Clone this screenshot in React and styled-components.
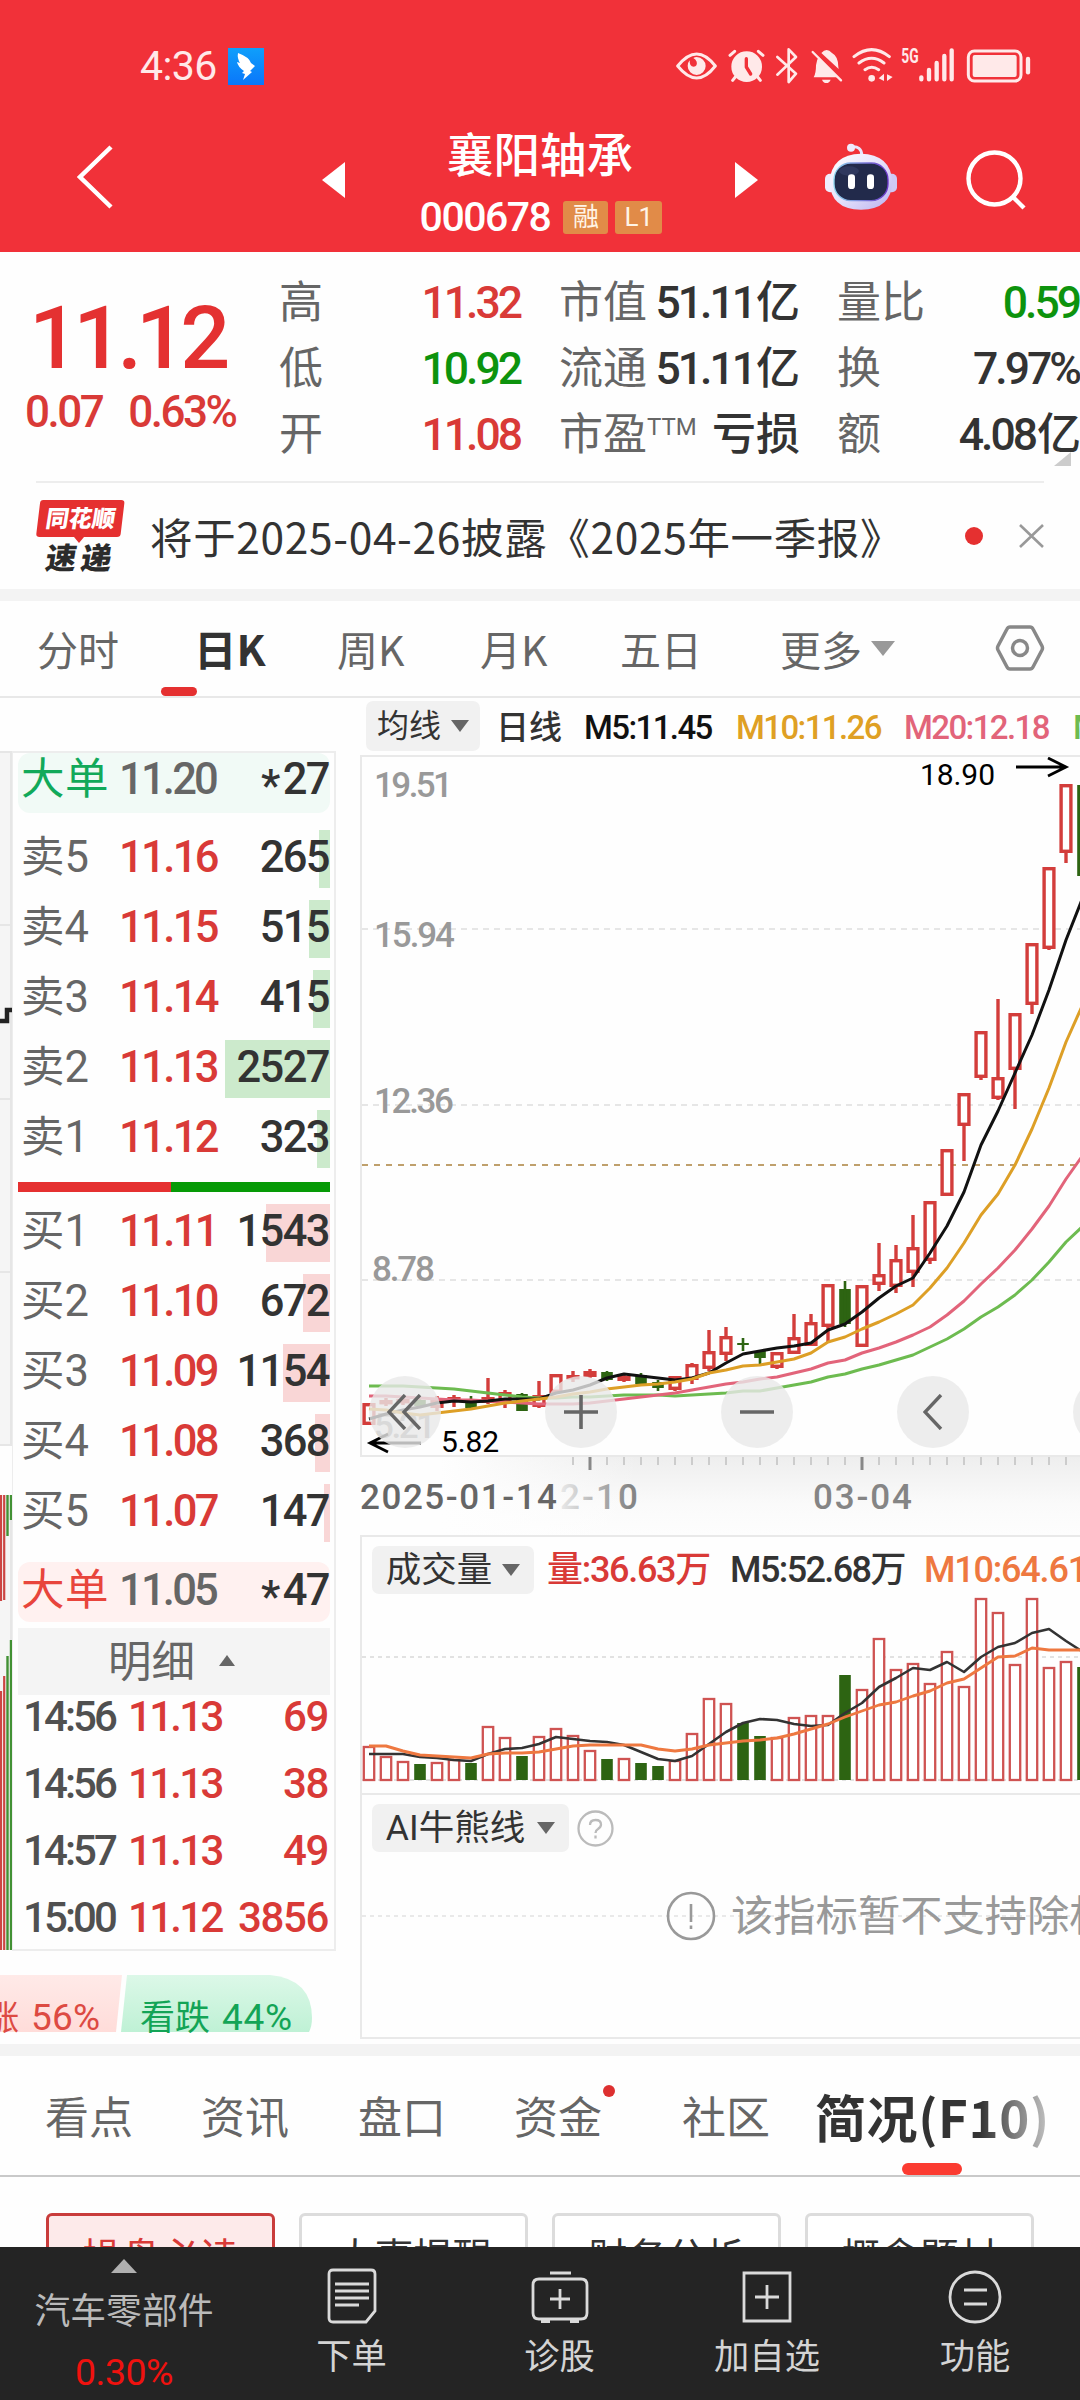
import React from 'react'
import styled, { createGlobalStyle, css } from 'styled-components'

const RED = '#d93a37'
const GREEN = '#0d930d'
const DARK = '#333333'
const GREY = '#666666'

const GlobalStyle = createGlobalStyle`
* { box-sizing: border-box; }
body {
  margin: 0;
  background: #fff;
  font-family: Roboto, "Noto Sans CJK SC", sans-serif;
  color: ${DARK};
}
svg { display: block; flex: none; }
`

const Page = styled.div`
width: 1080px;
height: 2400px;
display: flex;
flex-direction: column;
overflow: hidden;
background: #fefefe;
white-space: nowrap;
`

/* ---------- header ---------- */

const Header = styled.header`
height: 252px;
flex: none;
background: #f13139;
color: #fff;
display: flex;
flex-direction: column;
`

const StatusBar = styled.div`
height: 118px;
padding: 14px 49px 0 140px;
display: flex;
align-items: center;
`

const Clock = styled.span`
font-size: 41px;
letter-spacing: -0.6px;
color: #ffe9e9;
width: 88px;
`

const BirdBox = styled.span`
width: 36px;
height: 37px;
background: linear-gradient(#0f9ffb, #0a76fa);
margin-right: auto;
`

const NavBar = styled.div`
height: 134px;
display: grid;
grid-template-columns: 322px 23px 390px 23px 67px 72px 69px 60px;
align-items: center;
`

const BackSlot = styled.div`
padding: 0 0 16px 77px;
`

const TriSlot = styled.div`
padding-top: 0;
padding-bottom: ${p => p.pb || 10}px;
`

const TitleBlock = styled.div`
display: flex;
flex-direction: column;
align-items: center;
height: 134px;
padding-top: 9px;
`

const StockName = styled.div`
font-size: 46.5px;
line-height: 58px;
font-weight: 500;
`

const CodeLine = styled.div`
display: flex;
align-items: center;
height: 38px;
margin: 13px 0 0 2px;
gap: 7px;
`

const Code = styled.span`
font-size: 41px;
font-weight: 500;
letter-spacing: -1.5px;
margin-right: 6px;
`

const Badge = styled.span`
width: ${p => p.w}px;
height: 33px;
border-radius: 3px;
background: #e18b48;
font-size: 26px;
line-height: 32px;
text-align: center;
color: #fff4e6;
`

/* ---------- quote ---------- */

const Quote = styled.section`
height: 229px;
flex: none;
display: grid;
grid-template-columns: 279px 242px 38px 240px 38px 243px;
padding-top: 18px;
position: relative;
`

const PriceBox = styled.div`
color: ${RED};
padding-left: 25px;
`

const Price = styled.div`
font-size: 88px;
line-height: 90px;
font-weight: 500;
letter-spacing: -5.8px;
margin: 23px 0 0 4px;
color: #e43131;
`

const Change = styled.div`
display: flex;
gap: 26px;
font-size: 44px;
line-height: 54px;
letter-spacing: -2.5px;
font-weight: 500;
margin-top: 2px;
`

const Metrics = styled.div`
grid-column: ${p => p.col};
display: flex;
flex-direction: column;
`

const Metric = styled.div`
height: 66px;
display: flex;
align-items: center;
justify-content: space-between;
font-size: 44px;
line-height: 66px;
color: ${GREY};
`

const MetricValue = styled.span`
color: ${p => p.color || DARK};
font-weight: 500;
font-size: 44.5px;
letter-spacing: -3px;
margin-right: ${p => p.$unit ? -1 : 1}px;
`

const Hanzi = styled.span`
letter-spacing: 0;
margin-left: 2px;
font-size: 44px;
`

const Sup = styled.sup`
font-size: 24px;
line-height: 10px;
vertical-align: 15px;
font-weight: 400;
`

const Corner = styled.span`
position: absolute;
right: 9px;
bottom: 15px;
border-left: 17px solid transparent;
border-bottom: 14px solid #ccc;
`

const News = styled.section`
height: 108px;
flex: none;
margin: 0 36px;
border-top: 2px solid #ededed;
display: flex;
align-items: center;
`

const NewsLogo = styled.svg`
margin-bottom: 2px;
width: 90px;
height: 74px;
`

const NewsText = styled.div`
margin-left: 24px;
font-family: "Noto Sans CJK SC", sans-serif;
font-size: 42.5px;
line-height: 60px;
letter-spacing: 0.65px;
width: 816px;
padding-bottom: 1px;
`

const NewsDot = styled.i`
width: 18px;
height: 18px;
border-radius: 50%;
background: #e53030;
margin-right: 36px;
`

const Band = styled.div`
height: 12px;
flex: none;
background: #f3f3f3;
`

/* ---------- period tabs ---------- */

const PeriodTabs = styled.nav`
height: 97px;
flex: none;
border-bottom: 2px solid #e8e8e8;
display: grid;
grid-template-columns: 157px 143px 143px 140px 160px 215px 1fr;
padding-left: 37px;
font-family: "Noto Sans CJK SC", sans-serif;
font-size: 41px;
line-height: 92px;
color: ${GREY};
position: relative;

&::after {
  content: "";
  position: absolute;
  left: 161px;
  bottom: 0;
  width: 36px;
  height: 9px;
  border-radius: 5px;
  background: #e53030;
}
`

const Period = styled.span`
display: flex;
align-items: center;
height: 94px;
${p => p.$active && css`
  color: ${DARK};
  font-weight: 700;
  font-size: 42.5px;
`}
`

const Caret = styled.i`
border: ${p => (p.s || 18) / 2}px solid transparent;
border-bottom-width: 0;
border-top: ${p => p.h || 12}px solid ${p => p.color || GREY};
margin-left: ${p => p.gap || 10}px;
`

/* ---------- main area ---------- */

const Main = styled.section`
height: 1346px;
flex: none;
display: grid;
grid-template-columns: 12px 324px 24px 720px;
`

const MiniChart = styled.svg`
margin-top: 53px;
`

const LeftCol = styled.div`
padding-top: 53px;
`

const Book = styled.div`
height: 1200px;
width: 324px;
border: 2px solid #ededed;
border-left: 1px solid #ededed;
padding: 0 4px 0 5px;
display: flex;
flex-direction: column;
`

const rowText = css`
display: grid;
grid-template-columns: 98px 1fr auto;
align-items: center;
flex: none;
padding: 0 1px 2px 3px;
font-size: 43.5px;
line-height: 52px;
color: ${GREY};
`

const BigOrder = styled.div`
${rowText}
height: 60px;
border-radius: 12px;
padding-bottom: ${p => p.$buy ? 2 : 6}px;
margin-top: ${p => p.$buy ? 8 : 0}px;
margin-bottom: ${p => p.$buy ? 6 : 17}px;
background: ${p => p.$buy ? '#fff1f0' : '#f1faf6'};
`

const BigLabel = styled.span`
color: ${p => p.$buy ? '#e8453c' : '#12a95a'};
letter-spacing: 0.5px;
`

const Star = styled.span`
vertical-align: -7px;
line-height: 10px;
margin-right: 4px;
`

const Level = styled.div`
${rowText}
height: 58px;
margin-bottom: 12px;
background: linear-gradient(${p => p.$buy ? '#f9d6d6, #f9d6d6' : '#cceacc, #cceacc'}) right / ${p => p.depth}px 100% no-repeat;
`

const Num = styled.span`
font-weight: 500;
font-size: ${p => p.fs || 43.5}px;
letter-spacing: ${p => p.ls || -1.6}px;
color: ${p => p.color || DARK};
`

const Ratio = styled.div`
height: 10px;
flex: none;
margin: 2px 0 12px;
background: linear-gradient(90deg, #e53030 153px, #069a06 153px);
`

const DetailHead = styled.div`
height: 67px;
flex: none;
background: #f4f4f4;
display: flex;
align-items: center;
justify-content: center;
font-size: 43.5px;
line-height: 60px;
color: ${GREY};
padding: 3px 5px 0 0;
`

const UpCaret = styled.i`
border: 8px solid transparent;
border-top-width: 0;
border-bottom: 11px solid ${GREY};
margin: 0 0 5px 24px;
`

const Tick = styled.div`
display: grid;
grid-template-columns: 105px 1fr auto;
align-items: center;
height: 67px;
flex: none;
padding: 0 2px 23px 5px;
line-height: 44px;
`

const Mood = styled.div`
margin: 24px 0 0 -12px;
height: 58px;
width: 324px;
overflow: hidden;
position: relative;
`

/* ---------- charts ---------- */

const Charts = styled.div`
overflow: hidden;
`

const ChartHead = styled.div`
height: 57px;
display: flex;
align-items: center;
padding: 0 0 2px 6px;
font-size: 33px;
font-weight: 500;
`

const Picker = styled.span`
width: ${p => p.w}px;
height: ${p => p.h || 50}px;
flex: none;
border-radius: 7px;
background: #f1f1f1;
display: flex;
align-items: center;
justify-content: center;
font-size: ${p => p.fs || 32}px;
line-height: 48px;
font-weight: 400;
margin-right: ${p => p.mr || 16}px;
`

const Legend = styled.span`
color: ${p => p.color || DARK};
width: ${p => p.w}px;
letter-spacing: ${p => p.ls || 0}px;
flex: none;
line-height: 44px;
padding-top: 4px;
`

const KLine = styled.div`
height: 702px;
border: 2px solid #e9e9e9;
border-right: 0;
position: relative;
`

const Controls = styled.div`
position: absolute;
left: 7px;
bottom: 7px;
display: flex;
gap: 104px;
`

const RoundButton = styled.span`
width: 72px;
height: 72px;
border-radius: 50%;
background: rgba(232, 232, 232, 0.8);
display: flex;
align-items: center;
justify-content: center;
`

const Axis = styled.svg`
background: linear-gradient(90deg, #fefefe 80px, rgba(254, 254, 254, 0) 280px), linear-gradient(#eeeeee, #fafafa 60%, #fdfdfd);
`

const SubPanel = styled.div`
height: ${p => p.h}px;
border: 2px solid #e9e9e9;
border-right: 0;
border-bottom: ${p => p.$last ? '2px solid #e9e9e9' : 0};
padding: 9px 0 0 10px;
`

const SubHead = styled.div`
display: flex;
align-items: center;
height: 48px;
font-size: 36px;
font-weight: 500;

${Legend} { padding-top: 0; }
`

const VolumeSvg = styled.svg`
margin-left: -10px;
`

const Unsupported = styled.div`
margin: 32px 0 0 -10px;
height: 64px;
display: flex;
align-items: center;
line-height: 58px;
padding-left: 304px;
font-size: 42.3px;
color: #999;
gap: 15px;
background: repeating-linear-gradient(90deg, #e9e9e9 0 4px, transparent 4px 8px) left 31px / 100% 2px no-repeat;
`

const Notice = styled.span`
padding-top: 1px;
`

/* ---------- bottom ---------- */

const SectionTabs = styled.nav`
height: 121px;
flex: none;
border-bottom: 2px solid #c9c9c9;
display: grid;
grid-template-columns: 156px 157px 156px 168px 133px 1fr;
grid-template-rows: 119px;
padding-left: 45px;
font-size: 44px;
line-height: 126px;
color: ${GREY};
`

const SectionTab = styled.span`
position: relative;
${p => p.$dot && css`
  &::after {
    content: "";
    position: absolute;
    left: 89px;
    top: 29px;
    width: 12px;
    height: 12px;
    border-radius: 50%;
    background: #dd3030;
  }
`}
${p => p.$active && css`
  font-size: 51px;
  font-weight: 700;
  font-family: "Noto Sans CJK SC", sans-serif;
  line-height: 120px;
  letter-spacing: 0.6px;
  background: linear-gradient(90deg, ${DARK} 165px, #bbb 230px);
  background-clip: text;
  color: transparent;
  &::after {
    content: "";
    position: absolute;
    left: 87px;
    bottom: 0;
    width: 60px;
    height: 12px;
    border-radius: 6px;
    background: #fb3b31;
  }
`}
`

const Chips = styled.div`
height: 70px;
flex: none;
padding: 36px 46px 0;
display: grid;
grid-template-columns: repeat(4, 229px);
gap: 24px;
overflow: hidden;
`

const Chip = styled.div`
height: 90px;
border: 3px solid ${p => p.$active ? '#c93c3b' : '#dcdcdc'};
border-radius: 6px;
background: ${p => p.$active ? '#fdeaea' : '#fff'};
color: ${p => p.$active ? RED : DARK};
text-align: center;
font-size: 39px;
line-height: 84px;
`

const BottomBar = styled.footer`
height: 153px;
flex: none;
background: #242424;
color: #d4d4d4;
display: grid;
grid-template-columns: 248px 207px 209px 206px 210px;
`

const Sector = styled.div`
display: flex;
flex-direction: column;
align-items: center;
padding-top: 12px;
font-size: 35.8px;
line-height: 54px;
color: #bababa;
`

const SectorArrow = styled.i`
border: 13px solid transparent;
border-top-width: 0;
border-bottom: 14px solid #b0b0b0;
margin-bottom: 12px;
`

const SectorChange = styled.span`
font-size: 37.5px;
line-height: 46px;
letter-spacing: -0.5px;
margin-top: 10px;
color: #f0120f;
`

const Action = styled.div`
display: flex;
flex-direction: column;
align-items: center;
padding-top: 21px;
font-size: 35.3px;
line-height: 50px;

svg { margin-bottom: 8px; }
`

/* ---------- data ---------- */

const metrics = [
  { col: 2, rows: [['高', '11.32', RED], ['低', '10.92', GREEN], ['开', '11.08', RED]] },
  { col: 4, rows: [['市值', '51.11', DARK, '亿'], ['流通', '51.11', DARK, '亿'], ['市盈', '', DARK, '亏损', 'TTM']] },
  { col: 6, rows: [['量比', '0.59', GREEN], ['换', '7.97%', DARK], ['额', '4.08', DARK, '亿']] },
]

const asks = [['卖5', '11.16', 265, 11], ['卖4', '11.15', 515, 21], ['卖3', '11.14', 415, 17], ['卖2', '11.13', 2527, 105], ['卖1', '11.12', 323, 13]]
const bids = [['买1', '11.11', 1543, 64], ['买2', '11.10', 672, 27], ['买3', '11.09', 1154, 47], ['买4', '11.08', 368, 15], ['买5', '11.07', 147, 6]]
const ticks = [['14:56', '11.13', 69], ['14:56', '11.13', 38], ['14:57', '11.13', 49], ['15:00', '11.12', 3856]]

// [body top, body bottom, wick top, wick bottom, falling]
const candles = [
  [1403, 1425, 1403, 1425], [1400, 1404, 1398, 1406], [1399, 1403, 1397, 1405], [1400, 1406, 1399, 1408, 1],
  [1400, 1408, 1396, 1411], [1397, 1401, 1395, 1407], [1400, 1408, 1396, 1408, 1], [1397, 1403, 1378, 1404],
  [1392, 1402, 1390, 1408], [1394, 1411, 1393, 1411, 1], [1395, 1407, 1381, 1408], [1374, 1393, 1374, 1393],
  [1375, 1378, 1371, 1382], [1371, 1377, 1369, 1378], [1372, 1380, 1371, 1381, 1], [1376, 1381, 1375, 1382],
  [1375, 1384, 1373, 1384, 1], [1382, 1388, 1380, 1391, 1], [1376, 1390, 1376, 1391], [1364, 1380, 1363, 1384],
  [1351, 1369, 1330, 1371], [1336, 1355, 1327, 1361], [1343, 1345, 1338, 1351, 1], [1351, 1358, 1350, 1364, 1],
  [1352, 1368, 1352, 1369], [1337, 1354, 1314, 1354], [1322, 1346, 1314, 1346], [1284, 1327, 1284, 1342],
  [1289, 1324, 1281, 1327, 1], [1285, 1347, 1285, 1347], [1274, 1285, 1243, 1291], [1259, 1287, 1245, 1293],
  [1247, 1273, 1215, 1287], [1201, 1261, 1201, 1264], [1149, 1196, 1149, 1196], [1093, 1126, 1093, 1161],
  [1031, 1078, 1031, 1080], [1077, 1099, 999, 1100], [1013, 1070, 1013, 1109], [943, 1005, 943, 1014],
  [867, 949, 867, 950], [784, 853, 784, 863], [785, 876, 785, 876, 1],
]

const ma5 = [1419, 1414, 1410, 1407, 1403, 1401, 1402, 1401, 1399, 1399, 1399, 1393, 1390, 1385, 1378, 1374, 1376, 1378, 1380, 1378, 1373, 1363, 1354, 1351, 1348, 1346, 1343, 1330, 1324, 1312, 1298, 1286, 1278, 1253, 1226, 1192, 1145, 1111, 1073, 1035, 990, 940, 897]
const ma10 = [1409, 1410, 1413, 1415, 1413, 1411, 1409, 1406, 1403, 1401, 1399, 1397, 1394, 1392, 1389, 1387, 1385, 1384, 1382, 1379, 1373, 1370, 1366, 1365, 1362, 1359, 1353, 1342, 1337, 1329, 1322, 1314, 1305, 1288, 1268, 1243, 1215, 1194, 1165, 1129, 1088, 1042, 1004]
const ma20 = [1396, 1396, 1397, 1398, 1399, 1400, 1400, 1401, 1402, 1403, 1404, 1404, 1404, 1403, 1401, 1399, 1397, 1395, 1393, 1390, 1387, 1384, 1382, 1379, 1377, 1373, 1369, 1363, 1360, 1353, 1348, 1342, 1335, 1327, 1315, 1301, 1284, 1268, 1250, 1229, 1206, 1179, 1155]
const ma30 = [1386, 1386, 1386, 1387, 1388, 1389, 1391, 1393, 1395, 1397, 1398, 1398, 1397, 1397, 1396, 1395, 1395, 1395, 1396, 1395, 1394, 1393, 1391, 1391, 1388, 1385, 1382, 1377, 1374, 1369, 1365, 1360, 1355, 1347, 1339, 1329, 1317, 1307, 1295, 1280, 1262, 1242, 1226]

const volumes = [1747, 1757, 1762, 1764, 1763, 1760, 1763, 1727, 1738, 1756, 1737, 1729, 1736, 1751, 1759, 1759, 1763, 1766, 1761, 1734, 1699, 1704, 1723, 1736, 1738, 1718, 1716, 1716, 1675, 1690, 1639, 1670, 1664, 1684, 1652, 1687, 1599, 1613, 1665, 1599, 1668, 1662, 1667]
const vol5 = [1754, 1754, 1754, 1757, 1758, 1760, 1761, 1754, 1749, 1748, 1744, 1737, 1739, 1741, 1742, 1745, 1752, 1759, 1761, 1756, 1744, 1732, 1723, 1719, 1720, 1724, 1726, 1725, 1713, 1703, 1687, 1678, 1668, 1670, 1662, 1672, 1657, 1647, 1643, 1633, 1629, 1641, 1652]
const vol10 = [1746, 1746, 1751, 1755, 1756, 1757, 1758, 1754, 1753, 1753, 1752, 1749, 1746, 1745, 1745, 1745, 1745, 1749, 1751, 1749, 1745, 1743, 1741, 1740, 1738, 1734, 1729, 1724, 1717, 1711, 1705, 1702, 1696, 1691, 1683, 1679, 1668, 1657, 1656, 1648, 1650, 1650, 1650]

const cx = i => 368 + i * 17
const toPoints = list => list.map((y, i) => `${cx(i)},${y}`).join(' ')

/* ---------- icons ---------- */

function StatusIcons() {
  const c = '#ffe9e9'
  return (
    <svg width="355" height="38" viewBox="48 50 1065 114" fill="none" stroke={c} strokeWidth="9" strokeLinecap="round" strokeLinejoin="round">
      <path d="M53 107 Q82 71 110 71 Q138 71 166 107 Q138 143 110 143 Q82 143 53 107Z" />
      <path d="M110 80 a27 27 0 1 1 -27 27 q0 -10 6 -17 q-1 19 12 19 q12 -2 9 -15 q-3 -8 -10 -11 q5 -3 10 -3Z" fill={c} stroke="none" />
      <circle cx="260" cy="109" r="46" fill={c} stroke="none" />
      <path d="M210 75 L224 63 M309 75 L295 63 M226 140 L218 150 M293 140 L301 150" />
      <path d="M259 85 V110 L272 131" stroke="#f13139" strokeWidth="10" />
      <path d="M352 80 L408 130 L386 155 V57 L408 80 L352 133" strokeWidth="8" />
      <path d="M461 141 Q468 130 468 105 Q470 88 476 80 L534 141Z M484 68 Q500 50 516 68 Q535 78 535 110 L536 116Z M486 148 h26 q-4 10 -13 10 q-9 0 -13 -10Z" fill={c} stroke="none" />
      <path d="M458 65 L543 150" strokeWidth="7" />
      <path d="M582 79 Q635 37 688 79 M597 98 Q635 70 672 98 M615 118 Q635 104 656 118" />
      <circle cx="635" cy="144" r="10" fill={c} stroke="none" />
      <path d="M672 130 V152 L656 144Z M681 132 L698 140 L681 152Z" fill={c} stroke="none" />
      <g transform="translate(724 99) scale(0.68 1)">
        <text x="0" y="0" fontSize="61" fontWeight="700" fill={c} stroke="none">5G</text>
      </g>
      <path d="M784 141 V147 M807 119 V147 M830 98 V147 M853 77 V147 M875 60 V147" strokeWidth="13" />
      <rect x="925" y="62" width="158" height="90" rx="18" />
      <rect x="938" y="74" width="132" height="66" rx="6" fill={c} stroke="none" />
      <path d="M1104 86 V126" strokeWidth="13" />
    </svg>
  )
}

function Robot() {
  return (
    <svg width="72" height="68" viewBox="0 0 216 204">
      <defs>
        <linearGradient id="shell" x1="0" y1="0" x2="1" y2="1">
          <stop offset="0" stopColor="#fff" />
          <stop offset="0.5" stopColor="#e6e2fb" />
          <stop offset="1" stopColor="#b9b1f0" />
        </linearGradient>
        <linearGradient id="rim" x1="0" y1="0" x2="1" y2="0">
          <stop offset="0" stopColor="#8fd6ee" />
          <stop offset="1" stopColor="#6a35c8" />
        </linearGradient>
      </defs>
      <path d="M78 12 Q110 8 110 36" fill="none" stroke="#e9e4fb" strokeWidth="9" />
      <circle cx="78" cy="14" r="12" fill="#efeafd" />
      <rect x="0" y="92" width="34" height="56" rx="15" fill="#efecfd" />
      <rect x="182" y="92" width="34" height="56" rx="15" fill="#cfc9f5" />
      <path d="M108 32 Q196 34 202 115 Q200 200 108 200 Q16 200 14 115 Q20 34 108 32Z" fill="url(#shell)" />
      <rect x="27" y="60" width="162" height="113" rx="50" fill="#222a4b" stroke="url(#rim)" strokeWidth="4" />
      <ellipse cx="72" cy="84" rx="30" ry="14" fill="#39436a" opacity="0.6" />
      <rect x="69" y="94" width="21" height="44" rx="10" fill="#fff" />
      <rect x="126" y="94" width="21" height="44" rx="10" fill="#fff" />
    </svg>
  )
}

function Logo() {
  return (
    <NewsLogo viewBox="0 0 270 222">
      <path d="M22 6 H256 q10 0 9 10 L254 108 q-1 9 -11 9 H144 L129 135 L114 117 H10 q-10 0 -9 -10 L12 16 q1 -10 10 -10Z" fill="#e53030" />
      <g transform="skewX(-9)" fontFamily="Noto Sans CJK SC" fontWeight="900">
        <text x="40" y="88" fontSize="70" fill="#fff" textLength="208" lengthAdjust="spacingAndGlyphs">同花顺</text>
        <text x="58" y="212" fontSize="90" fill="#2b2b2b" textLength="92" lengthAdjust="spacingAndGlyphs">速</text>
        <text x="164" y="212" fontSize="90" fill="#2b2b2b" textLength="92" lengthAdjust="spacingAndGlyphs">递</text>
      </g>
    </NewsLogo>
  )
}

function CandleChart() {
  return (
    <svg width="719" height="698" viewBox="361 757 719 698">
      <g stroke="#dedede" strokeWidth="1.5" strokeDasharray="6 5">
        <path d="M361 929 H1080 M361 1105 H1080 M361 1280 H1080" />
      </g>
      <path d="M361 1165 H1080" stroke="#bfa06c" strokeWidth="2" strokeDasharray="6 6" />
      <g fontSize="35" fontWeight="500" fill="#999">
        <text x="373" y="797" textLength="79">19.51</text>
        <text x="373" y="947" textLength="81">15.94</text>
        <text x="373" y="1113" textLength="80">12.36</text>
        <text x="371" y="1281" textLength="63">8.78</text>
        <text x="373" y="1438" textLength="62">5.21</text>
      </g>
      {candles.map(([t, b, h, l, down], i) => down ? (
        <g key={i} fill="#2d6412">
          <rect x={cx(i) - 5.8} y={t} width="11.6" height={b - t} />
          <rect x={cx(i) - 1.3} y={h} width="2.6" height={l - h} />
        </g>
      ) : (
        <g key={i} stroke="#d33d3b" strokeWidth="3.4" fill="#fff">
          <path d={`M${cx(i)} ${h} V${t} M${cx(i)} ${b} V${l}`} />
          <rect x={cx(i) - 4.9} y={t + 1.7} width="9.8" height={Math.max(b - t - 3.4, 1)} />
        </g>
      ))}
      <g fill="none" strokeWidth="3" strokeLinejoin="round">
        <polyline points={toPoints(ma30)} stroke="#6dbb50" />
        <polyline points={toPoints(ma20)} stroke="#e2647a" />
        <polyline points={toPoints(ma5)} stroke="#111" />
        <polyline points={toPoints(ma10)} stroke="#dd9f26" />
      </g>
      <g fontSize="30" fill="#000">
        <text x="919" y="785" textLength="75">18.90</text>
        <text x="440" y="1452" textLength="58">5.82</text>
      </g>
      <g fill="none" stroke="#000" strokeWidth="2.8">
        <path d="M1015 767 H1065 M1047 758 L1065 767 L1047 776" />
        <path d="M420 1443 H369 M387 1434 L369 1443 L387 1452" />
      </g>
    </svg>
  )
}

function DateAxis() {
  return (
    <Axis width="720" height="78" viewBox="360 1457 720 78">
      <defs>
        <linearGradient id="fade" gradientUnits="userSpaceOnUse" x1="545" y1="0" x2="630" y2="0">
          <stop offset="0" stopColor="#fff" />
          <stop offset="1" stopColor="#858585" />
        </linearGradient>
      </defs>
      {candles.map((_, i) => i > 11 && (
        <path
          key={i}
          d={`M${cx(i) + 1} 1456 V${i === 13 || i === 29 ? 1470 : 1465}`}
          stroke={i === 13 || i === 29 ? '#888' : '#ccc'}
          strokeWidth={i === 13 || i === 29 ? 3 : 2}
        />
      ))}
      <g fontSize="35" fontWeight="500">
        <text x="560" y="1509" fill="url(#fade)" textLength="78">2-10</text>
        <text x="813" y="1509" fill="#858585" textLength="99">03-04</text>
        <text x="360" y="1509" fill="#666" textLength="197">2025-01-14</text>
      </g>
    </Axis>
  )
}

function VolumeChart() {
  return (
    <VolumeSvg width="719" height="198" viewBox="361 1594 719 198">
      <path d="M361 1657 H1080 M361 1780 H1080" stroke="#e2e2e2" strokeWidth="1.8" strokeDasharray="4 4" />
      {volumes.map((y, i) => candles[i][4] ? (
        <rect key={i} x={cx(i) - 5.8} y={y} width="11.6" height={1780 - y} fill="#2d6412" />
      ) : (
        <rect key={i} x={cx(i) - 5.2} y={y} width="10.4" height={1780 - y} fill="#fff" stroke="#cf5352" strokeWidth="2.3" />
      ))}
      <g fill="none" strokeWidth="2.6" strokeLinejoin="round">
        <polyline points={toPoints(vol5)} stroke="#333" />
        <polyline points={toPoints(vol10)} stroke="#ee7840" strokeWidth="2.9" />
      </g>
    </VolumeSvg>
  )
}

function IntradayEdge() {
  return (
    <MiniChart width="12" height="1200" viewBox="0 751 12 1200">
      <path d="M0 751 H12 V1445 H0Z M0 1495 H12 V1950 H0Z" fill="#f5f5f5" />
      <path d="M0 752 H12 M0 925 H12 M0 1099 H12 M0 1272 H12 M0 1445 H12 M11 751 V1445 M11 1495 V1950" stroke="#e6e6e6" strokeWidth="2" />
      <path d="M0 1021 H7 V1010 H12" fill="none" stroke="#222" strokeWidth="4.5" />
      <path d="M1 1495 V1601 M4.2 1495 V1600 M1 1691 V1950 M4.2 1676 V1950" stroke="#cc4543" strokeWidth="2.2" />
      <path d="M7.5 1495 V1536 M11 1495 V1520 M7.5 1656 V1950 M11 1640 V1950" stroke="#429134" strokeWidth="2.4" />
    </MiniChart>
  )
}

function MoodBar() {
  return (
    <Mood>
      <svg width="324" height="58" viewBox="0 1975 324 58" fontSize="33">
        <defs>
          <linearGradient id="up" x1="0" y1="0" x2="0" y2="1">
            <stop offset="0" stopColor="#ffeae8" />
            <stop offset="1" stopColor="#ffdcd9" />
          </linearGradient>
          <linearGradient id="down" x1="0" y1="0" x2="0" y2="1">
            <stop offset="0" stopColor="#dcf8e8" />
            <stop offset="1" stopColor="#bff1d5" />
          </linearGradient>
        </defs>
        <path d="M0 1975 H122 L116 2032 H0Z" fill="url(#up)" />
        <path d="M127 1975 H270 Q312 1979 312 2018 Q312 2026 309 2032 H121Z" fill="url(#down)" />
        <text x="-15" y="2030" fontSize="34" fill="#dd4a42">涨</text>
        <text x="31" y="2030" fontSize="37" fill="#dd4a42" textLength="69">56%</text>
        <text x="140" y="2030" fontSize="35" fill="#13a456">看跌</text>
        <text x="222" y="2030" fontSize="37" fill="#13a456" textLength="70">44%</text>
      </svg>
    </Mood>
  )
}

const iconProps = { fill: 'none', stroke: '#dadada', strokeWidth: 2.8 }

function BigOrderRow({ buy, price, qty }) {
  return (
    <BigOrder $buy={buy}>
      <BigLabel $buy={buy}>大单</BigLabel>
      <Num color={GREY} ls={-2.8}>{price}</Num>
      <Num><Star>*</Star>{qty}</Num>
    </BigOrder>
  )
}

function LevelRow({ buy, data: [name, price, qty, depth] }) {
  return (
    <Level $buy={buy} depth={depth}>
      <span>{name}</span>
      <Num color={RED} ls={-2.6}>{price}</Num>
      <Num>{qty}</Num>
    </Level>
  )
}

function App() {
  return (
    <>
      <GlobalStyle />
      <Page>
        <Header>
          <StatusBar>
            <Clock>4:36</Clock>
            <BirdBox>
              <svg width="36" height="37" viewBox="0 0 36 37"><path d="M10 5 Q21 9 23 15 L27 18 L22 23 L24 24 L15 32 L17 26 L14 25 L16 23 Q10 19 9 14 L12 15 Q9 10 10 5Z" fill="#fff" /></svg>
            </BirdBox>
            <StatusIcons />
          </StatusBar>
          <NavBar>
            <BackSlot>
              <svg width="36" height="64" viewBox="0 0 36 64" fill="none" stroke="#fff" strokeWidth="4.5"><path d="M34 2 L3 32 L34 62" /></svg>
            </BackSlot>
            <TriSlot><svg width="23" height="46" viewBox="0 0 23 46"><path d="M23 5 V41 L0 23Z" fill="#fff" /></svg></TriSlot>
            <TitleBlock>
              <StockName>襄阳轴承</StockName>
              <CodeLine>
                <Code>000678</Code>
                <Badge w={45}>融</Badge>
                <Badge w={47}>L1</Badge>
              </CodeLine>
            </TitleBlock>
            <TriSlot><svg width="23" height="46" viewBox="0 0 23 46"><path d="M0 5 V41 L23 23Z" fill="#fff" /></svg></TriSlot>
            <span />
            <TriSlot pb={17}><Robot /></TriSlot>
            <span />
            <TriSlot>
              <svg width="60" height="60" viewBox="0 0 60 60" fill="none" stroke="#fff" strokeWidth="4.4"><circle cx="28.500" cy="28.500" r="26" /><path d="M47 47 L58 58" /></svg>
            </TriSlot>
          </NavBar>
        </Header>

        <Quote>
          <PriceBox>
            <Price>11.12</Price>
            <Change><span>0.07</span><span>0.63%</span></Change>
          </PriceBox>
          {metrics.map(m => (
            <Metrics key={m.col} col={m.col}>
              {m.rows.map(([label, value, color, unit, sup]) => (
                <Metric key={label}>
                  <span>{label}{sup && <Sup>{sup}</Sup>}</span>
                  <MetricValue color={color} $unit={!!unit}>{value}{unit && <Hanzi>{unit}</Hanzi>}</MetricValue>
                </Metric>
              ))}
            </Metrics>
          ))}
          <Corner />
        </Quote>

        <News>
          <Logo />
          <NewsText>将于2025-04-26披露《2025年一季报》</NewsText>
          <NewsDot />
          <svg width="25" height="24" viewBox="0 0 25 24" stroke="#999" strokeWidth="2.600"><path d="M1 1 L24 23 M24 1 L1 23" /></svg>
        </News>
        <Band />

        <PeriodTabs>
          <Period>分时</Period>
          <Period $active>日K</Period>
          <Period>周K</Period>
          <Period>月K</Period>
          <Period>五日</Period>
          <Period>更多<Caret s={24} h={15} color="#999" gap={9} /></Period>
          <Period>
            <svg width="50" height="48" viewBox="0 0 50 48" fill="none" stroke="#888" strokeWidth="3.500" strokeLinejoin="round">
              <path d="M15 3 H35 Q37 3 38 5 L47 22 Q48 24 47 26 L38 43 Q37 45 35 45 H15 Q13 45 12 43 L3 26 Q2 24 3 22 L12 5 Q13 3 15 3Z" />
              <circle cx="25" cy="24" r="7.500" />
            </svg>
          </Period>
        </PeriodTabs>

        <Main>
          <IntradayEdge />
          <LeftCol>
            <Book>
              <BigOrderRow price="11.20" qty={27} />
              {asks.map(a => <LevelRow key={a[0]} data={a} />)}
              <Ratio />
              {bids.map(b => <LevelRow key={b[0]} data={b} buy />)}
              <BigOrderRow price="11.05" qty={47} buy />
              <DetailHead>明细<UpCaret /></DetailHead>
              {ticks.map(([time, price, qty], i) => (
                <Tick key={i}>
                  <Num fs={42} color="#505050" ls={-2.9}>{time}</Num>
                  <Num fs={42} color={RED} ls={-2.7}>{price}</Num>
                  <Num fs={42} color={RED} ls={-1.4}>{qty}</Num>
                </Tick>
              ))}
            </Book>
            <MoodBar />
          </LeftCol>
          <span />
          <Charts>
            <ChartHead>
              <Picker w={114}>均线<Caret /></Picker>
              <Legend w={88}>日线</Legend>
              <Legend w={152} color="#111" ls={-1.6}>M5:11.45</Legend>
              <Legend w={168} color="#dfa024" ls={-1.6}>M10:11.26</Legend>
              <Legend w={169} color="#e2647a" ls={-1.6}>M20:12.18</Legend>
              <Legend w={169} color="#6dbb50" ls={-1.6}>M30:10.66</Legend>
            </ChartHead>
            <KLine>
              <CandleChart />
              <Controls>
                <RoundButton><svg width="36" height="36" viewBox="0 0 36 36" fill="none" stroke={GREY} strokeWidth="3.400"><path d="M18 1 L2 18 L18 35 M33 1 L17 18 L33 35" /></svg></RoundButton>
                <RoundButton><svg width="34" height="34" viewBox="0 0 34 34" stroke={GREY} strokeWidth="3.600"><path d="M0 17 H34 M17 0 V34" /></svg></RoundButton>
                <RoundButton><svg width="34" height="34" viewBox="0 0 34 34" stroke={GREY} strokeWidth="3.600"><path d="M0 17 H34" /></svg></RoundButton>
                <RoundButton><svg width="20" height="36" viewBox="0 0 20 36" fill="none" stroke={GREY} strokeWidth="3.400"><path d="M18 1 L2 18 L18 35" /></svg></RoundButton>
                <RoundButton />
              </Controls>
            </KLine>
            <DateAxis />
            <SubPanel h={258}>
              <SubHead>
                <Picker w={162} h={48} fs={35.5} mr={13}>成交量<Caret /></Picker>
                <Legend w={183} color={RED} ls={-1.3}>量:36.63万</Legend>
                <Legend w={194} ls={-1.6}>M5:52.68万</Legend>
                <Legend w={190} color="#ee7840" ls={-1.2}>M10:64.61万</Legend>
              </SubHead>
              <VolumeChart />
            </SubPanel>
            <SubPanel h={246} $last>
              <SubHead>
                <Picker w={197} h={48} fs={35.5} mr={8}>AI牛熊线<Caret gap={12} /></Picker>
                <svg width="37" height="37" viewBox="0 0 37 37" fill="none" stroke="#bbb" strokeWidth="2.300">
                  <circle cx="18.500" cy="18.500" r="17" />
                  <path d="M13 15 Q13 10 18.500 10 Q24 10 24 14.500 Q24 17 21 19 Q18.500 20.500 18.500 23 M18.500 25.500 V28.500" />
                </svg>
              </SubHead>
              <Unsupported>
                <svg width="50" height="50" viewBox="0 0 50 50" stroke="#999" strokeWidth="2.600" fill="none"><circle cx="25" cy="25" r="23" /><path d="M25 13 V31 M25 34.500 V38" /></svg>
                <Notice>该指标暂不支持除权</Notice>
              </Unsupported>
            </SubPanel>
          </Charts>
        </Main>
        <Band />

        <SectionTabs>
          <SectionTab>看点</SectionTab>
          <SectionTab>资讯</SectionTab>
          <SectionTab>盘口</SectionTab>
          <SectionTab $dot>资金</SectionTab>
          <SectionTab>社区</SectionTab>
          <SectionTab $active>简况(F10)</SectionTab>
        </SectionTabs>
        <Chips>
          <Chip $active>操盘必读</Chip>
          <Chip>大事提醒</Chip>
          <Chip>财务分析</Chip>
          <Chip>概念题材</Chip>
        </Chips>

        <BottomBar>
          <Sector>
            <SectorArrow />
            汽车零部件
            <SectorChange>0.30%</SectorChange>
          </Sector>
          <Action>
            <svg width="50" height="56" viewBox="0 0 50 56" {...iconProps}>
              <path d="M6 2 H44 Q48 2 48 6 V43 L39 54 H6 Q2 54 2 50 V6 Q2 2 6 2Z M8 16 H42 M8 23 H42 M8 30 H42 M8 37 H32" />
            </svg>
            下单
          </Action>
          <Action>
            <svg width="58" height="56" viewBox="0 0 58 56" {...iconProps}>
              <path d="M8 11 H50 Q56 11 56 17 V45 Q56 51 50 51 H8 Q2 51 2 45 V17 Q2 11 8 11Z M19 5 H40 M19 31 H39 M29 21 V41 M10 53.500 H19 M39 53.500 H48" />
            </svg>
            诊股
          </Action>
          <Action>
            <svg width="50" height="56" viewBox="0 0 50 56" {...iconProps}>
              <path d="M2 5 H48 V53 H2Z M13 29 H37 M25 17 V41" />
            </svg>
            加自选
          </Action>
          <Action>
            <svg width="54" height="56" viewBox="0 0 54 56" {...iconProps}>
              <circle cx="27" cy="29" r="25" /><path d="M16 22 H39 M16 36 H39" />
            </svg>
            功能
          </Action>
        </BottomBar>
      </Page>
    </>
  )
}

export default App
